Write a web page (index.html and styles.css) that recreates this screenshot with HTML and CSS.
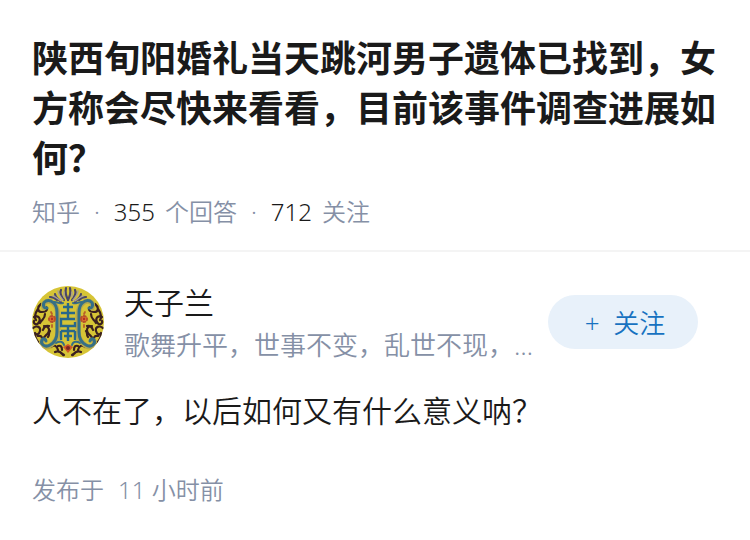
FILE: index.html
```html
<!DOCTYPE html>
<html lang="zh-CN">
<head>
  <meta charset="UTF-8" />
  <meta name="viewport" content="width=device-width, initial-scale=1.0" />
  <title>知乎</title>
  <link rel="stylesheet" href="styles.css">
</head>
<body>
  <header class="question">
    <h1>陕西旬阳婚礼当天跳河男子遗体已找到，女方称会尽快来看看，目前该事件调查进展如何？</h1>
    <div class="meta">
      <span>知乎</span>
      <span class="dot">·</span>
      <span class="count">355</span>
      <span>个回答</span>
      <span class="dot">·</span>
      <span class="count">712</span>
      <span>关注</span>
    </div>
  </header>

  <main class="answer">
    <div class="author">
      <svg class="avatar" viewBox="0 0 72 72" aria-hidden="true">
        <defs>
          <clipPath id="round"><circle cx="36" cy="36" r="36" /></clipPath>
          <!-- left half of the pattern, mirrored for the right -->
          <g id="half" fill="none" stroke-linecap="round" stroke-linejoin="round">
            <g stroke="#3a2020" stroke-width="2.2">
              <path d="M9 18c-4 3-4 8 1 8s6-3 4-5M6 23c-3 4-4 8-2 11M2 31c4-2 7 1 5 5s-6 2-5-1M13 28c0 5-3 5-5 9M17 40c-3-1-5 1-6 4" />
              <path d="M1 42c4-3 8-1 7 3s-4 4-5 2M12 40c5 0 6 4 4 7s-5 3-4 7M6 50c4-1 5 2 3 6M18 45c-2 2 0 4-2 6M3 48c0 4 2 7 4 9" />
              <path d="M19 61c3-3 6-1 7 3M26 60c3-1 4 1 4 4M23 66c4-2 6 0 8 3M29 67l3 2" />
            </g>
            <path stroke="#b5a84c" stroke-width="5.2" d="M12 22c-3-6 5-9 9-5 4 3 5 7 5 14v14c0 7-3 11-7 14-5 4-11 1-9-4" />
            <path stroke="#356f86" stroke-width="3" d="M15 22c-4 1-5-5-1-7 5-2 11 3 11 11v20c0 7-3 11-7 13-5 3-10-1-8-5 1-2 4-1 4 1" />
            <path stroke="#356f86" stroke-width="2" d="M22 16c4 0 6 2 9 1M24 57c3-2 7-2 8 2" />
            <path stroke="#4a4668" stroke-width="2.2" d="M23 8c0 4 4 5 6 8M29 4c-2 4 1 7 3 10M34 2c-1 4 0 8 2 12M18 11c3 0 5 1 7 3" />
            <path stroke="#a8a094" stroke-width="1.4" d="M26 5c0 4 3 6 5 9M32 6v5M21 10c3 1 5 3 8 5" />
            <circle cx="20" cy="33" r="3" fill="#e8832c" stroke="#b8502a" stroke-width="2" stroke-dasharray="2 2" />
            <circle cx="20" cy="33" r="1.4" fill="#b42f27" />
            <path stroke="#b8602a" stroke-width="1.8" d="M19 26l1 2M20 39v2" />
          </g>
        </defs>
        <g clip-path="url(#round)">
          <rect width="72" height="72" fill="#d6c436" />
          <use href="#half" />
          <use href="#half" transform="matrix(-1 0 0 1 72 0)" />
          <path fill="none" stroke="#28678a" stroke-width="2.4" d="M36 17v16M31 21h10M29 27h14M43 33H29v7h14v-4M36 40v15M29 45h14M29 45v9M43 45v9M32 50h8" />
          <path fill="#cf5629" d="M36 58l5 3-5 6-5-6z" />
          <circle cx="36" cy="62" r="2" fill="#7e2723" />
        </g>
      </svg>
      <div class="info">
        <div class="name">天子兰</div>
        <div class="headline">歌舞升平，世事不变，乱世不现，…</div>
      </div>
      <button class="follow" type="button">+&nbsp; 关注</button>
    </div>
    <p class="content">人不在了，以后如何又有什么意义呐？</p>
    <div class="time"><span>发布于</span><span>11 小时前</span></div>
  </main>
</body>
</html>
```

FILE: styles.css
```css
* {
  box-sizing: border-box;
}

body {
  margin: 0;
  background: #fff;
  color: #1a1a1a;
  font-family: "Noto Sans", "Noto Sans CJK SC", sans-serif;
  font-weight: 350;
}

.question {
  padding: 34px 32px 22px;
  border-bottom: 2px solid #f4f4f4;
}

h1 {
  margin: 0;
  font-size: 36px;
  font-weight: 700;
  line-height: 50px;
}

.meta {
  display: flex;
  gap: 10px;
  margin-top: 12px;
  font-size: 24px;
  line-height: 32px;
  color: #8590a6;
}

.dot {
  padding: 0 4px;
}

.count {
  color: #1a1a1a;
}

.answer {
  padding: 28px 32px;
}

.author {
  display: flex;
  align-items: center;
  padding-right: 20px;
}

.avatar {
  flex: none;
  width: 72px;
  height: 72px;
  margin-right: 20px;
}

.info {
  flex: 1;
  min-width: 0;
}

.name {
  font-size: 30px;
  line-height: 46px;
}

.headline {
  overflow: hidden;
  font-size: 26px;
  line-height: 38px;
  color: #8590a6;
  text-overflow: ellipsis;
  white-space: nowrap;
}

.follow {
  flex: none;
  width: 150px;
  height: 54px;
  margin-left: 8px;
  padding: 0 0 0 4px;
  border: none;
  border-radius: 27px;
  background: #e8f1fa;
  color: #1772c0;
  font: inherit;
  font-size: 26px;
  cursor: pointer;
}

.content {
  margin: 22px 0 0;
  font-size: 30px;
  line-height: 50px;
}

.time {
  display: flex;
  gap: 14px;
  margin-top: 36px;
  font-size: 24px;
  line-height: 36px;
  color: #8590a6;
}
```
